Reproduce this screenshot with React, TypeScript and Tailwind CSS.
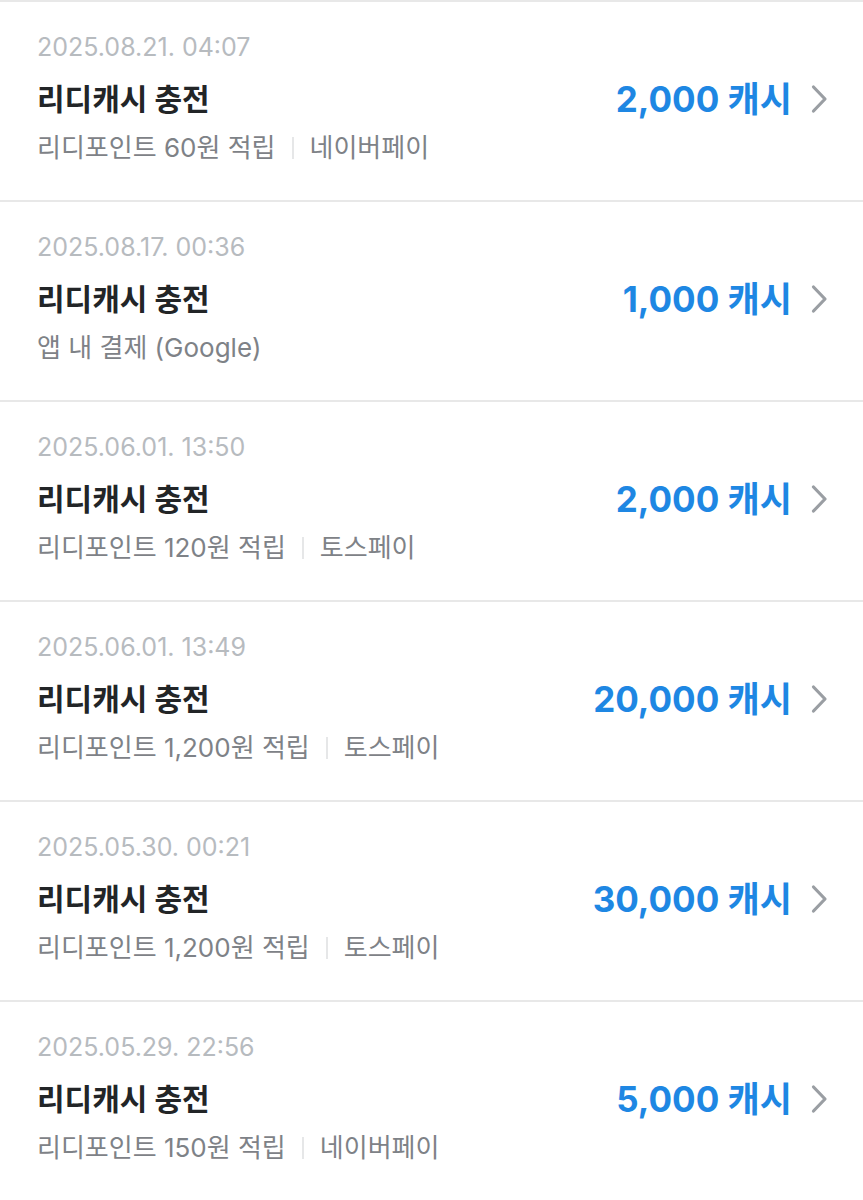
import React from 'react';

type Charge = {
  date: string;
  amount: string;
  point?: string;
  method: string;
};

const charges: Charge[] = [
  { date: '2025.08.21. 04:07', amount: '2,000', point: '60', method: '네이버페이' },
  { date: '2025.08.17. 00:36', amount: '1,000', method: '앱 내 결제 (Google)' },
  { date: '2025.06.01. 13:50', amount: '2,000', point: '120', method: '토스페이' },
  { date: '2025.06.01. 13:49', amount: '20,000', point: '1,200', method: '토스페이' },
  { date: '2025.05.30. 00:21', amount: '30,000', point: '1,200', method: '토스페이' },
  { date: '2025.05.29. 22:56', amount: '5,000', point: '150', method: '네이버페이' },
];

function Chevron() {
  return (
    <svg width="22" height="30" viewBox="0 0 22 30" fill="none" className="shrink-0">
      <path d="M5.5 3 L17 15 L5.5 27" stroke="#9a9ea3" strokeWidth="3.2" strokeLinecap="round" strokeLinejoin="round" />
    </svg>
  );
}

export default function App() {
  return (
    <div className="min-h-[1200px] bg-white font-['Inter','Noto_Sans_CJK_KR',sans-serif]">
      {charges.map((c, i) => (
        <div key={i} className="h-[200px] border-t-2 border-[#e8e8e8] pl-[37px] pr-[33px] pt-[29px]">
          <p className="text-[25px] leading-[32px] text-[#b7bbbf]">{c.date}</p>
          <div className="mt-[16px] flex items-center justify-between">
            <p className="text-[30px] leading-[38px] font-bold text-[#222527]">리디캐시 충전</p>
            <div className="flex items-center gap-[16px]">
              <span className="text-[35px] leading-[40px] font-bold text-[#1e87e3]">{c.amount} 캐시</span>
              <Chevron />
            </div>
          </div>
          <div className="mt-[13px] flex items-center text-[26px] leading-[32px] text-[#7e8287]">
            {c.point && (
              <>
                <span>리디포인트 {c.point}원 적립</span>
                <span className="mx-[16px] h-[22px] w-[2px] bg-[#e6e7e8]" />
              </>
            )}
            <span>{c.method}</span>
          </div>
        </div>
      ))}
    </div>
  );
}
